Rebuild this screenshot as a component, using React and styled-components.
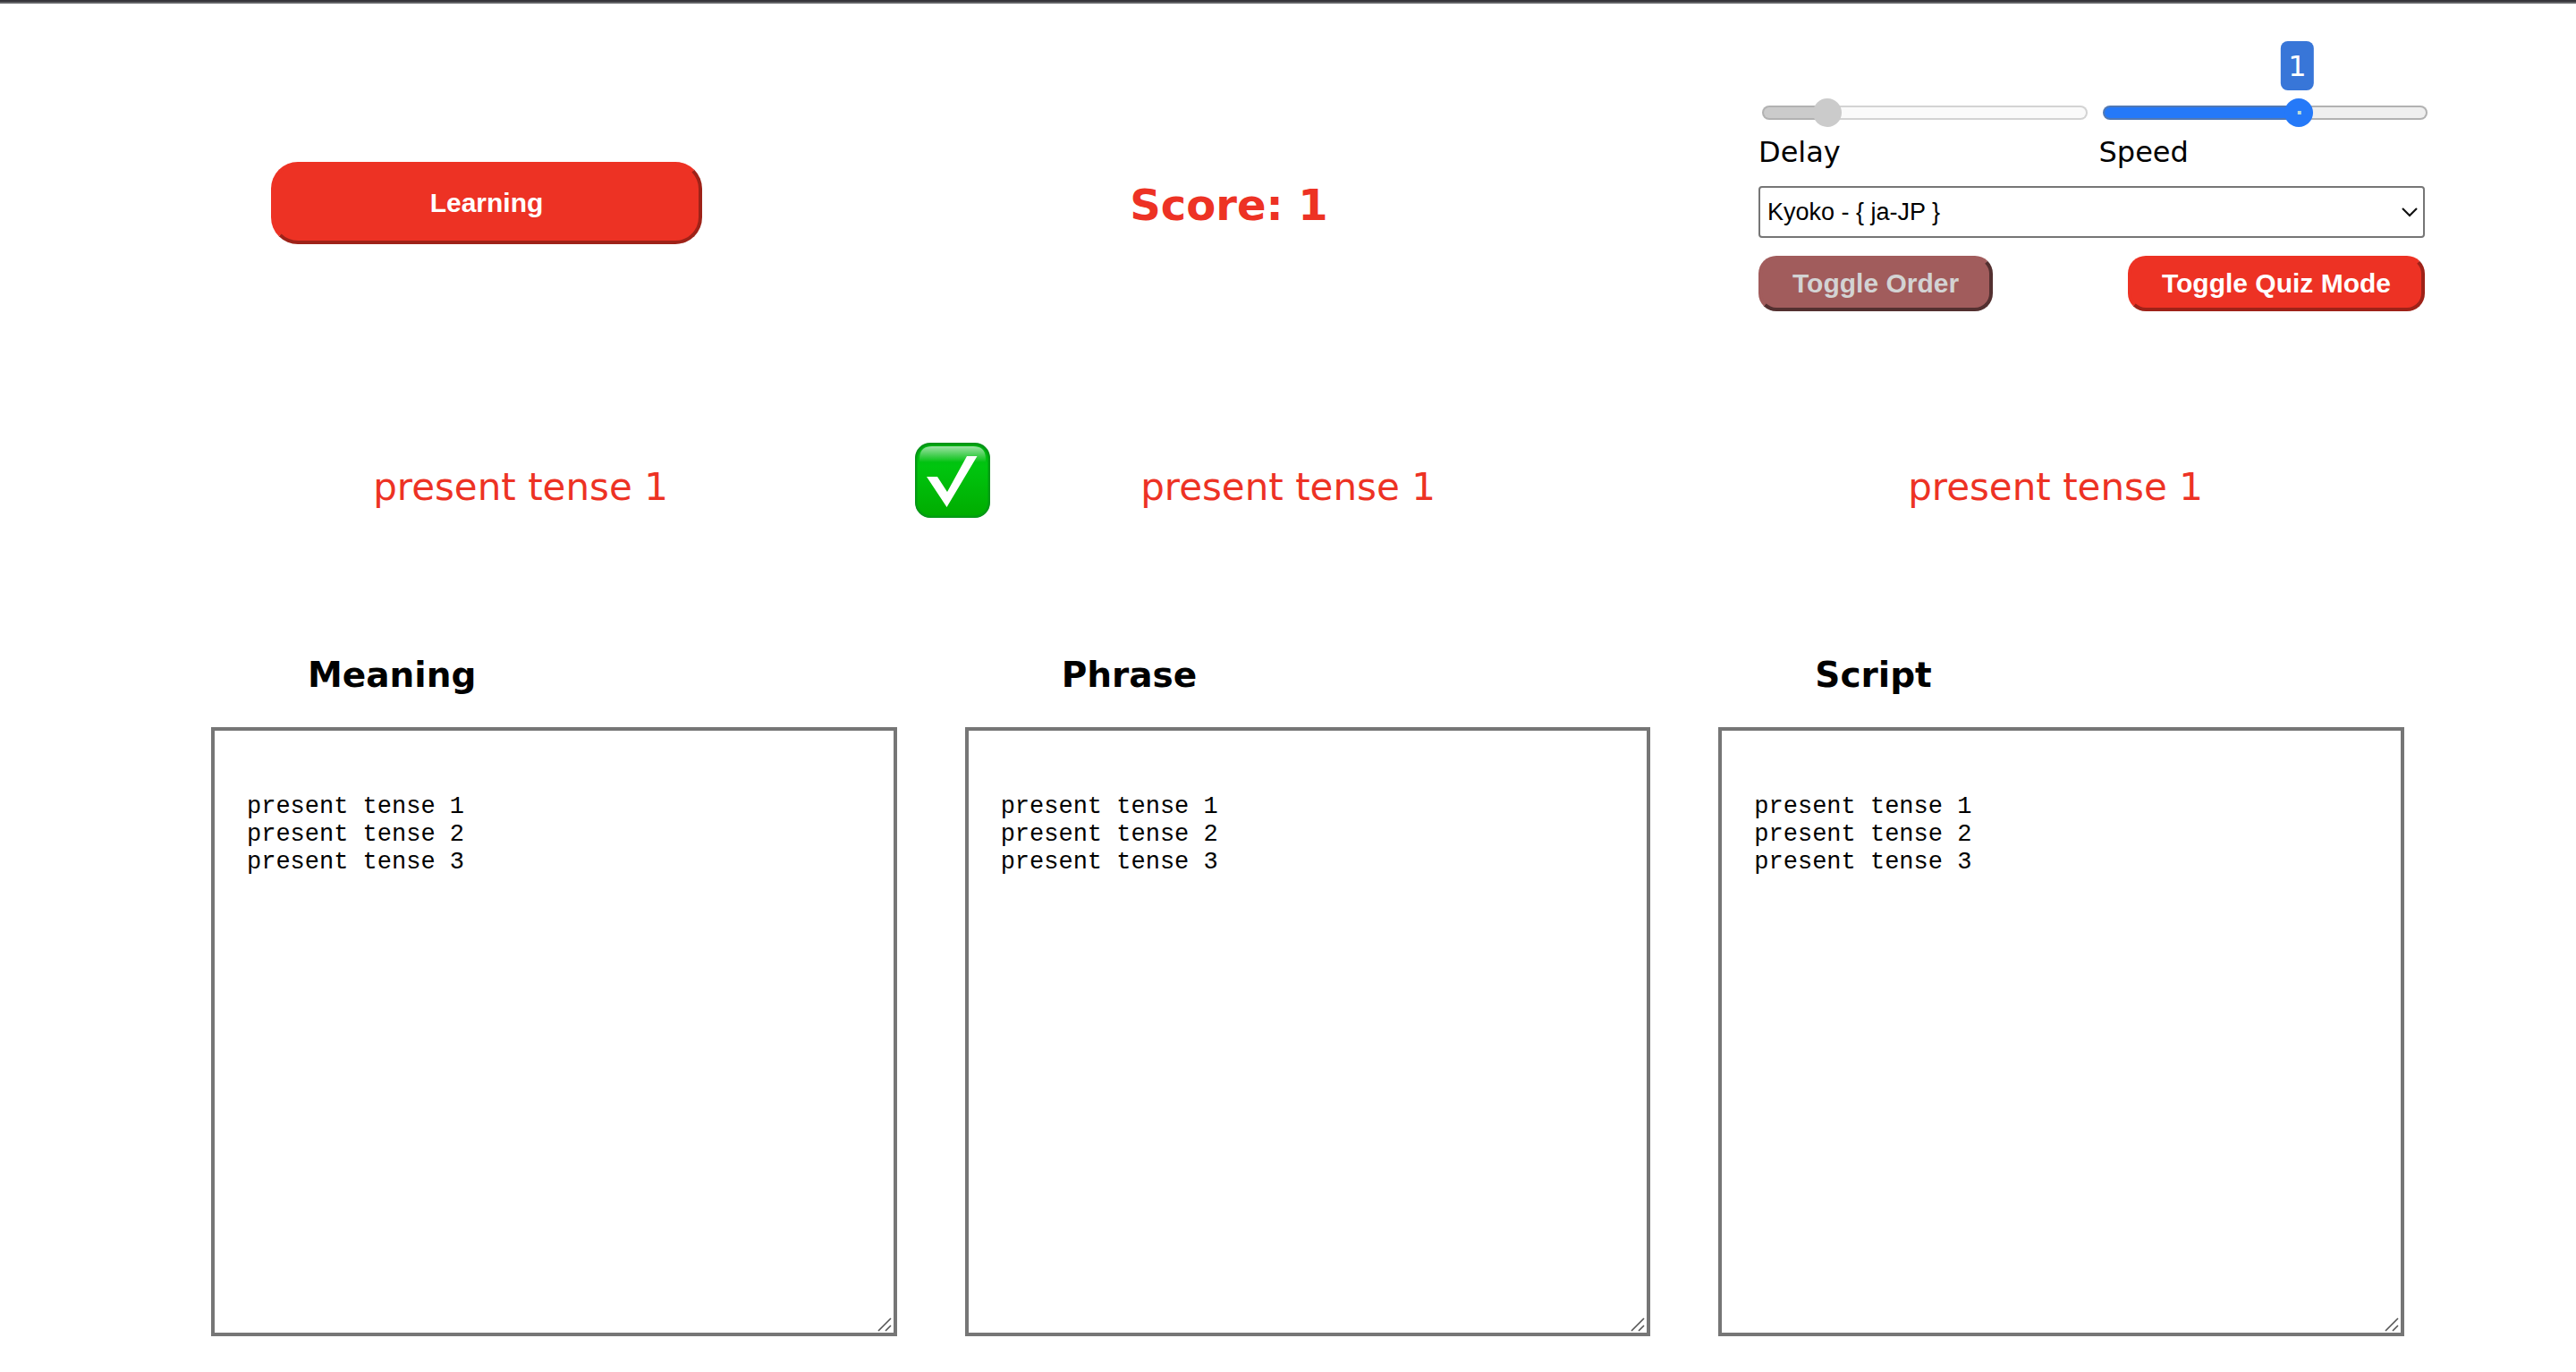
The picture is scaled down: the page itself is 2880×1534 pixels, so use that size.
import React, { useState } from "react";
import styled, { createGlobalStyle, css } from "styled-components";

const sans = '"DejaVu Sans", sans-serif';
const arial = '"Liberation Sans", sans-serif';
const red = "#ed3224";

const GlobalStyle = createGlobalStyle`
  *, *::before, *::after { box-sizing: border-box; }
  body { margin: 0; background: #fff; color: #000; font-family: ${sans}; }
`;

const Page = styled.main`
  border-top: 2px solid #36353a;

  &::before {
    content: "";
    display: block;
    height: 2px;
    background: #626366;
  }
`;

const Header = styled.header`
  display: grid;
  grid-template-columns: 1fr 1fr auto;
  align-items: center;
  justify-items: center;
  padding: 102px 169px 0 129px;
`;

const Button = styled.button`
  padding: 0 34px;
  height: 62px;
  border: 4px solid;
  border-color: ${red} #9e2218 #9e2218 ${red};
  border-radius: 20px;
  background: ${red};
  color: #fff;
  font: bold 30px/36px ${arial};
  white-space: nowrap;

  &:disabled {
    border-color: #a15c5c #533030 #533030 #a15c5c;
    background: #a15c5c;
    color: #d3d3d3;
  }

  ${(p) =>
    p.$large &&
    css`
      width: 482px;
      height: 92px;
      border-radius: 30px;
    `}
`;

const Score = styled.h1`
  margin: 0;
  padding-top: 4px;
  color: ${red};
  font-size: 48px;
  line-height: 56px;
`;

const Controls = styled.section`
  width: 745px;
  margin-left: 177px;
  padding-top: 4px;
`;

const Sliders = styled.div`
  display: grid;
  grid-template-columns: 1fr 1fr;
  gap: 16px;
`;

const Field = styled.div`
  display: flex;
  flex-direction: column;
  gap: 8px;
`;

const Track = styled.div`
  position: relative;
  display: flex;
  margin: 0 -3px 0 4px;
`;

const Range = styled.input`
  --fill: #2579f8;
  --edge: #5078b4;
  --rest: #efefef;
  --rest-edge: #b2b2b2;
  appearance: none;
  width: 100%;
  height: 32px;
  margin: 0;
  background: none;

  &:disabled {
    --fill: #cbcbcb;
    --edge: #b2b2b2;
    --rest: #fafafa;
    --rest-edge: #d3d3d3;
  }

  &::-webkit-slider-runnable-track {
    height: 16px;
    border: 2px solid transparent;
    border-radius: 8px;
    background:
      linear-gradient(to right, var(--fill) var(--pos), var(--rest) var(--pos)) padding-box,
      linear-gradient(to right, var(--edge) var(--pos), var(--rest-edge) var(--pos)) border-box;
  }

  &::-webkit-slider-thumb {
    appearance: none;
    width: 32px;
    height: 32px;
    margin-top: -10px;
    border-radius: 50%;
    background: var(--fill);
  }
`;

const Bubble = styled.output`
  position: absolute;
  bottom: 41px;
  left: calc(var(--pos) - 2px);
  padding: 9px 8px 7px;
  border-radius: 8px;
  background: #3876d8;
  color: #fff;
  font-size: 32px;
  line-height: 39px;
  transform: translateX(-50%);

  &::after {
    content: "";
    position: absolute;
    top: 78px;
    left: 50%;
    width: 4px;
    height: 4px;
    background: #bcdcd6;
  }
`;

const Label = styled.label`
  font-size: 32px;
  line-height: 40px;
`;

const VoiceSelect = styled.select`
  appearance: none;
  display: block;
  width: 100%;
  height: 58px;
  margin: 18px 0 20px;
  padding: 0 40px 0 8px;
  border: 2px solid #767676;
  border-radius: 4px;
  background: #fff
    url("data:image/svg+xml,%3Csvg xmlns='http://www.w3.org/2000/svg' width='18' height='11' fill='none' stroke='%23111' stroke-width='2.2'%3E%3Cpath d='M1 1l8 8 8-8'/%3E%3C/svg%3E")
    no-repeat right 6px center;
  color: #000;
  font: 27px/32px ${arial};
`;

const ButtonRow = styled.div`
  display: flex;
  justify-content: space-between;
`;

const Prompts = styled.section`
  display: grid;
  grid-template-columns: repeat(3, 1fr);
  padding: 147px 153px 0;
`;

const Prompt = styled.div`
  display: grid;
  grid-template-columns: 1fr auto 1fr;
  align-items: end;
  min-height: 84px;
`;

const PromptText = styled.p`
  grid-column: 2;
  margin: 0;
  color: ${red};
  font-size: 42px;
  line-height: 68px;
`;

const Mark = styled.svg`
  grid-area: 1 / 1;
  width: 84px;
  height: 84px;
  margin-left: 12px;
`;

const Lists = styled.section`
  display: grid;
  grid-template-columns: repeat(3, 1fr);
  gap: 76px;
  padding: 152px 192px 40px 236px;
`;

const List = styled.div`
  display: flex;
  flex-direction: column;
  gap: 34px;
`;

const ListTitle = styled.label`
  padding-left: 108px;
  font-size: 39px;
  font-weight: bold;
  line-height: 48px;
`;

const ListText = styled.textarea`
  display: block;
  width: 100%;
  height: 681px;
  padding: 70px 36px 36px;
  border: 4px solid #767676;
  border-radius: 0;
  background: #fff
    url("data:image/svg+xml,%3Csvg xmlns='http://www.w3.org/2000/svg' width='16' height='16' fill='none' stroke='%23555' stroke-width='1.6'%3E%3Cpath d='M1 15L15 1M9 15l6-6'/%3E%3C/svg%3E")
    no-repeat right 2px bottom 1px;
  color: #000;
  font: 27px/31px "Liberation Mono", monospace;
  resize: vertical;

  &::-webkit-resizer {
    background: transparent;
  }
`;

function CheckMark() {
  return (
    <Mark viewBox="0 0 84 84" role="img" aria-label="Correct">
      <defs>
        <linearGradient id="face" x1="0" y1="0" x2="0" y2="1">
          <stop offset="0" stopColor="#00b512" />
          <stop offset="0.3" stopColor="#00c50f" />
          <stop offset="1" stopColor="#00ac00" />
        </linearGradient>
        <linearGradient id="shine" x1="0" y1="0" x2="0" y2="1">
          <stop offset="0" stopColor="#fff" stopOpacity="0.62" />
          <stop offset="1" stopColor="#fff" stopOpacity="0" />
        </linearGradient>
      </defs>
      <rect width="84" height="84" rx="17" fill="#07901a" />
      <rect x="1.5" y="2" width="81" height="80.5" rx="16" fill="url(#face)" stroke="#039d12" strokeWidth="2" />
      <path d="M5 22V18Q5 4 19 4H65Q79 4 79 18V22Z" fill="url(#shine)" />
      <path d="M13 38H25L36 55 58 15H69.500L35.500 72Z" fill="#fff" />
    </Mark>
  );
}

function Slider({ id, label, bubble, min, max, step, initial, disabled }) {
  const [value, setValue] = useState(initial);
  const part = (value - min) / (max - min);
  const pos = `calc(16px + (100% - 32px) * ${part})`;
  return (
    <Field>
      <Track style={{ "--pos": pos }}>
        <Range
          type="range"
          id={id}
          min={min}
          max={max}
          step={step}
          value={value}
          disabled={disabled}
          onChange={(e) => setValue(Number(e.target.value))}
        />
        {bubble && <Bubble htmlFor={id}>{value}</Bubble>}
      </Track>
      <Label htmlFor={id}>{label}</Label>
    </Field>
  );
}

const phrases = ["present tense 1", "present tense 2", "present tense 3"];
const lists = ["Meaning", "Phrase", "Script"];

export default function App() {
  return (
    <Page>
      <GlobalStyle />
      <Header>
        <Button $large type="button">Learning</Button>
        <Score>Score: 1</Score>
        <Controls>
          <Sliders>
            <Slider id="delay" label="Delay" min={0} max={6} step={1} initial={1} disabled />
            <Slider id="speed" label="Speed" min={0.2} max={1.5} step={0.1} initial={1} bubble />
          </Sliders>
          <VoiceSelect aria-label="Voice">
            <option>{"Kyoko - { ja-JP }"}</option>
          </VoiceSelect>
          <ButtonRow>
            <Button type="button" disabled>Toggle Order</Button>
            <Button type="button">Toggle Quiz Mode</Button>
          </ButtonRow>
        </Controls>
      </Header>
      <Prompts>
        {lists.map((name) => (
          <Prompt key={name}>
            {name === "Phrase" && <CheckMark />}
            <PromptText>{phrases[0]}</PromptText>
          </Prompt>
        ))}
      </Prompts>
      <Lists>
        {lists.map((name) => (
          <List key={name}>
            <ListTitle htmlFor={name}>{name}</ListTitle>
            <ListText id={name} defaultValue={phrases.join("\n")} spellCheck={false} />
          </List>
        ))}
      </Lists>
    </Page>
  );
}
